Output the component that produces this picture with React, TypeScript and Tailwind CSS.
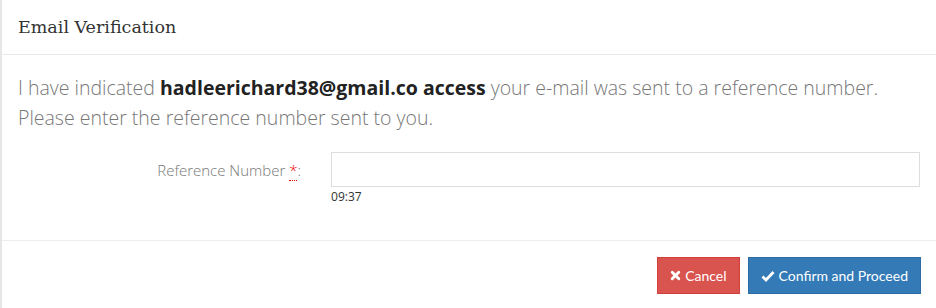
import React from "react";

export default function App() {
  return (
    <div className="w-[936px] h-[308px] bg-white border-l-2 border-[#e6e6e6] overflow-hidden" style={{ fontFamily: '"Open Sans", "Noto Sans", sans-serif' }}>
      <div className="h-[55px] border-b border-[#e9e9e9] px-4 flex items-center">
        <h4 className="text-[17.5px] text-[#333] font-normal" style={{ fontFamily: '"DejaVu Serif", serif' }}>Email Verification</h4>
      </div>
      <div className="px-4 pt-[18px]">
        <p className="text-[19.5px] leading-[30px] font-light text-[#777]">
          I have indicated <b className="font-bold text-[#222]">hadleerichard38@gmail.co access</b> your e-mail was sent to a reference number.<br />Please enter the reference number sent to you.
        </p>
        <div className="flex mt-[19px]">
          <label className="w-[284px] text-right text-[15px] font-light text-[#777] pt-[8px] leading-[20px]">
            Reference Number{" "}
            <abbr className="text-[#e00] no-underline border-b border-dotted border-[#e00]" title="required">*</abbr>:
          </label>
          <div className="ml-[30px] w-[591px]">
            <input className="block w-full h-[35px] border border-[#ddd] outline-none" />
            <div className="text-[12px] text-[#333] mt-[3px] leading-[14px]">09:37</div>
          </div>
        </div>
      </div>
      <div className="mt-[36px] border-t border-[#eeeeee] flex justify-end gap-2 px-[15px] pt-[16px]">
        <button className="h-[37px] px-3 bg-[#d9534f] border border-[#d43f3a] text-white text-[14px] flex items-center gap-1" style={{ fontFamily: '"Lato", sans-serif' }}>
          <svg width="11" height="11" viewBox="0 0 10 10"><path d="M2 2 L8 8 M8 2 L2 8" stroke="white" strokeWidth="2.6" strokeLinecap="round" /></svg>
          Cancel
        </button>
        <button className="h-[37px] px-3 bg-[#337ab7] border border-[#2e6da4] text-white text-[14px] flex items-center gap-1" style={{ fontFamily: '"Lato", sans-serif' }}>
          <svg width="14" height="12" viewBox="0 0 14 12"><path d="M1.5 6.5 L5 10 L12.5 2" fill="none" stroke="white" strokeWidth="2.8" strokeLinejoin="miter" /></svg>
          Confirm and Proceed
        </button>
      </div>
    </div>
  );
}
